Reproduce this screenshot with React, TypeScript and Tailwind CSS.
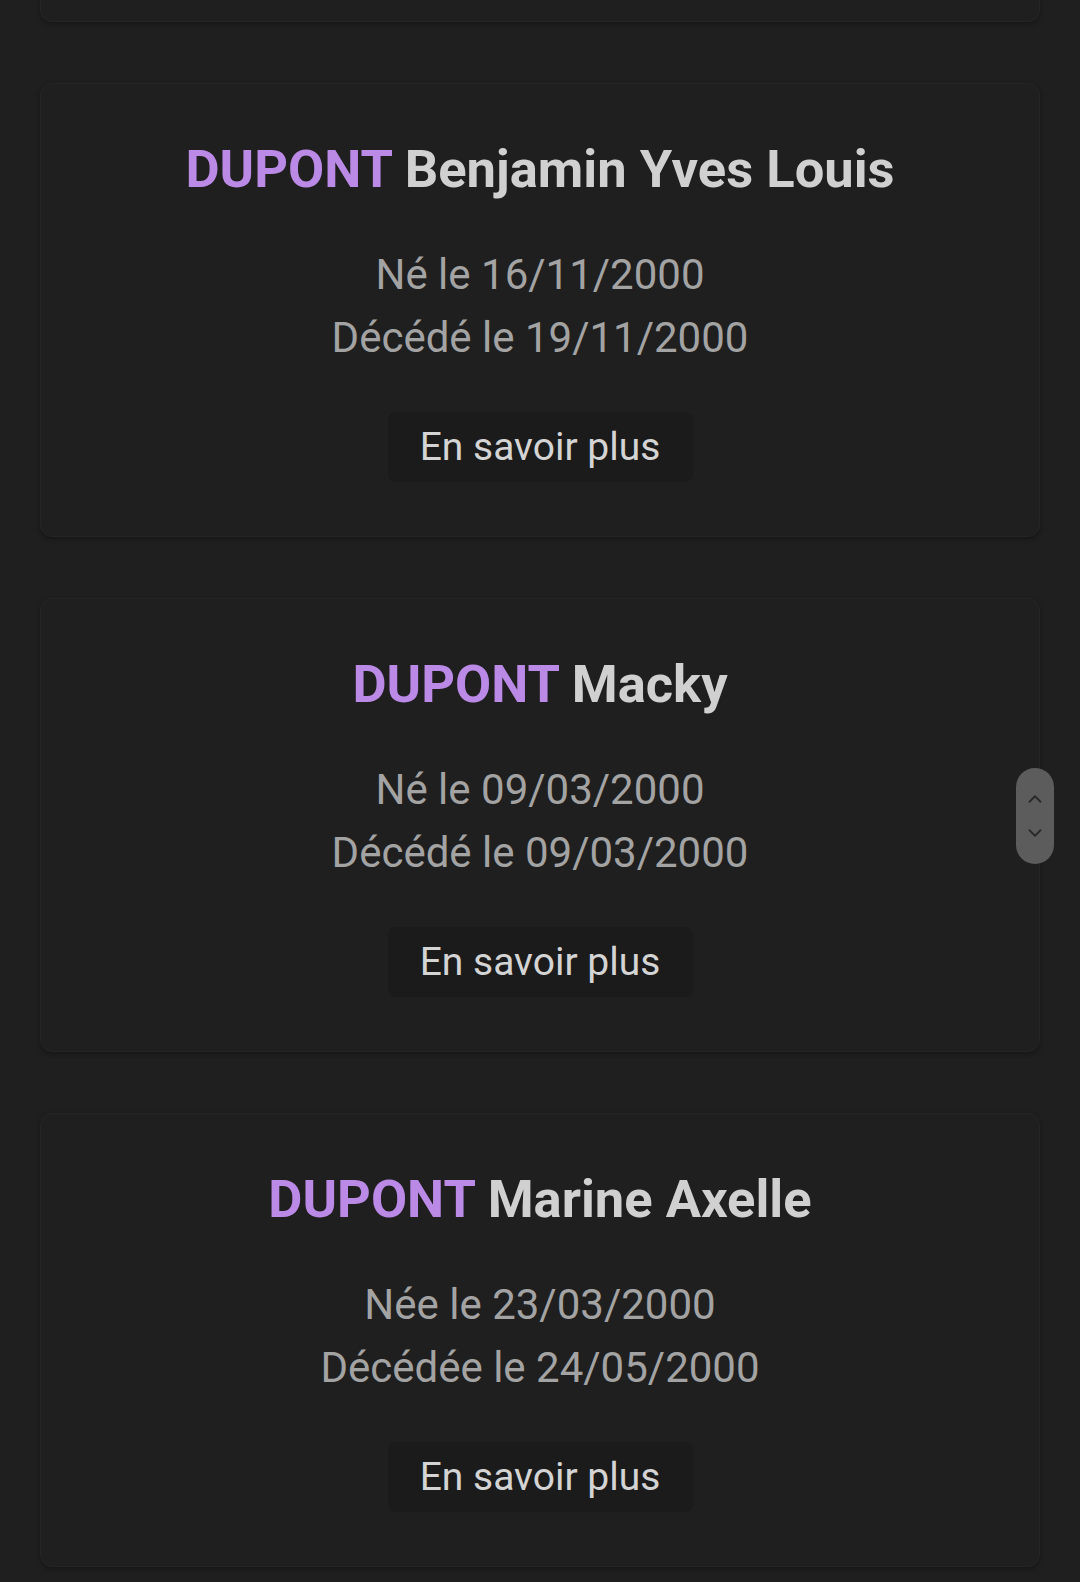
import { ChevronUp, ChevronDown } from "lucide-react";

type Person = {
  nom: string;
  prenoms: string;
  naissance: string;
  deces: string;
};

const people: Person[] = [
  { nom: "DUPONT", prenoms: "Benjamin Yves Louis", naissance: "Né le 16/11/2000", deces: "Décédé le 19/11/2000" },
  { nom: "DUPONT", prenoms: "Macky", naissance: "Né le 09/03/2000", deces: "Décédé le 09/03/2000" },
  { nom: "DUPONT", prenoms: "Marine Axelle", naissance: "Née le 23/03/2000", deces: "Décédée le 24/05/2000" },
];

const PersonCard = ({ person }: { person: Person }) => {
  return (
    <div className="w-full h-[454px] rounded-xl bg-[#1f1f1f] border border-[#252525] shadow-[0_2px_5px_rgba(0,0,0,0.3)] flex flex-col items-center pt-[54px]">
      {/* Nom */}
      <h2 className="text-[52.5px] leading-[62px] font-bold">
        <span className="text-[#bb89e6]">{person.nom}</span>{" "}
        <span className="text-[#d0d0d0]">{person.prenoms}</span>
      </h2>

      {/* Dates */}
      <div className="mt-[43px] text-[42px] leading-[63px] text-[#a3a3a3] text-center">
        <p>{person.naissance}</p>
        <p>{person.deces}</p>
      </div>

      <button className="mt-[43px] h-[70px] w-[305px] rounded-lg bg-[#1b1b1b] text-[39px] text-[#d4d4d4] flex items-center justify-center">
        En savoir plus
      </button>
    </div>
  );
};

export default function App() {
  return (
    <div
      className="min-h-[1582px] w-full bg-[#1f1f1f] relative overflow-hidden"
      style={{ fontFamily: "Roboto, 'Noto Sans', sans-serif" }}
    >
      <div className="px-[40px] flex flex-col gap-[61px]">
        {/* bas de la carte précédente */}
        <div className="w-full h-[22px] rounded-b-xl bg-[#1f1f1f] border border-t-0 border-[#252525] shadow-[0_2px_5px_rgba(0,0,0,0.3)]" />
        {people.map((p) => (
          <PersonCard key={p.prenoms} person={p} />
        ))}
      </div>

      {/* Scroll widget */}
      <div className="absolute left-[1016px] top-[768px] w-[38px] h-[96px] rounded-full bg-[#5c5c5c] flex flex-col items-center justify-center gap-[12px]">
        <ChevronUp size={22} strokeWidth={2} className="text-[#2a2a2a]" />
        <ChevronDown size={22} strokeWidth={2} className="text-[#2a2a2a]" />
      </div>
    </div>
  );
}
